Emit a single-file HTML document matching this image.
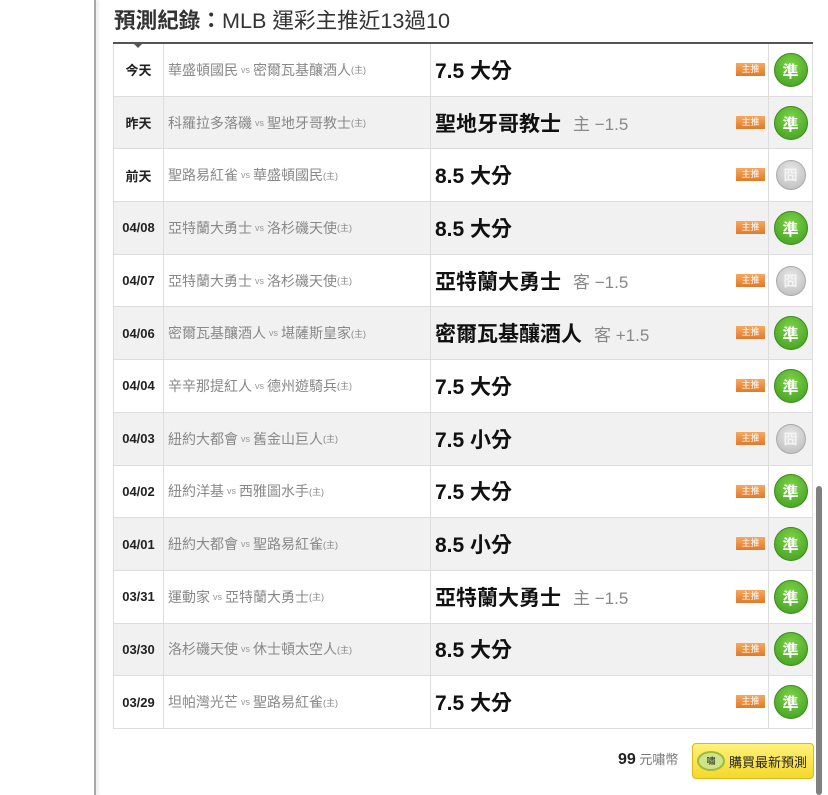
<!DOCTYPE html>
<html><head><meta charset="utf-8"><style>
*{margin:0;padding:0;box-sizing:border-box}
body{width:828px;height:795px;background:#fff;position:relative;overflow:hidden;font-family:"Liberation Sans","Noto Sans CJK TC",sans-serif}
.lb{position:absolute;left:94px;top:0;width:2px;height:795px;background:#a8a8a8;box-shadow:2px 0 3px #ddd}
.sb{position:absolute;left:816px;top:486px;width:6px;height:309px;background:#808080;border-radius:3px}
h1{position:absolute;left:114px;top:4px;font-size:21.6px;font-weight:normal;color:#333;white-space:nowrap}
h1 b{font-weight:bold}
.tb{position:absolute;left:113px;top:42px;width:700px;border-top:2px solid #555}
.tri{position:absolute;left:133px;top:43px;width:0;height:0;border-left:5px solid transparent;border-right:5px solid transparent;border-top:5px solid #555}
.r{display:flex;height:52.7px;border-bottom:1px solid #ddd}
.r.g{background:#f1f1f1}
.r>div{border-left:1px solid #ddd;display:flex;align-items:center}
.d{width:50px;justify-content:center;font-size:13px;font-weight:bold;color:#222}
.m{width:267px;padding-left:4px;font-size:14px;color:#888;white-space:nowrap}
.m small{font-size:9px;color:#999;margin:0 3px}
.m i{font-style:normal;font-size:9px}
.p{width:338px;padding-left:4px;font-size:21px;font-weight:bold;color:#111;position:relative}
.p span{font-weight:normal;color:#888;font-size:17px;margin-left:12px}
.bd{position:absolute;right:3px;top:19px;width:29px;height:13px;background:linear-gradient(#f6a860,#e07a2a);color:#fff;font-size:9px;font-weight:normal;font-style:normal;text-align:center;line-height:13px}
.s{width:45px;justify-content:center;border-right:1px solid #ddd}
.c{width:34px;height:34px;border-radius:50%;background:radial-gradient(circle at 50% 35%,#7fd34a,#3c9b1c);color:#fff;font-size:16px;font-weight:bold;display:flex;align-items:center;justify-content:center;border:1px solid #3a8a1a}
.c.x{width:30px;height:30px;background:radial-gradient(circle at 50% 35%,#e8e8e8,#b8b8b8);border:1px solid #aaa;color:#f4f4f4;font-size:14px}
.ft{position:absolute;left:618px;top:749px;font-size:13px;color:#777}
.ft b{font-size:16px;color:#222}
.btn{position:absolute;left:692px;top:743px;width:122px;height:36px;background:linear-gradient(#fff27a,#f5d82a);border:1px solid #d9b820;border-radius:4px;font-size:13px;color:#222;display:flex;align-items:center;padding-left:4px}
.btn i{display:inline-block;width:28px;height:20px;border-radius:50%;background:#cfe48a;border:2px solid #9bbb3a;margin-right:4px;font-style:normal;font-size:9px;text-align:center;line-height:16px}
</style></head><body>
<div class="lb"></div><div class="sb"></div>
<h1><b>預測紀錄：</b>MLB 運彩主推近13過10</h1>
<div class="tb">
<div class="r"><div class="d">今天</div><div class="m">華盛頓國民<small>vs</small>密爾瓦基釀酒人<i>(主)</i></div><div class="p">7.5 大分<em class="bd">主推</em></div><div class="s"><div class="c">準</div></div></div>
<div class="r g"><div class="d">昨天</div><div class="m">科羅拉多落磯<small>vs</small>聖地牙哥教士<i>(主)</i></div><div class="p">聖地牙哥教士<span>主 −1.5</span><em class="bd">主推</em></div><div class="s"><div class="c">準</div></div></div>
<div class="r"><div class="d">前天</div><div class="m">聖路易紅雀<small>vs</small>華盛頓國民<i>(主)</i></div><div class="p">8.5 大分<em class="bd">主推</em></div><div class="s"><div class="c x">囧</div></div></div>
<div class="r g"><div class="d">04/08</div><div class="m">亞特蘭大勇士<small>vs</small>洛杉磯天使<i>(主)</i></div><div class="p">8.5 大分<em class="bd">主推</em></div><div class="s"><div class="c">準</div></div></div>
<div class="r"><div class="d">04/07</div><div class="m">亞特蘭大勇士<small>vs</small>洛杉磯天使<i>(主)</i></div><div class="p">亞特蘭大勇士<span>客 −1.5</span><em class="bd">主推</em></div><div class="s"><div class="c x">囧</div></div></div>
<div class="r g"><div class="d">04/06</div><div class="m">密爾瓦基釀酒人<small>vs</small>堪薩斯皇家<i>(主)</i></div><div class="p">密爾瓦基釀酒人<span>客 +1.5</span><em class="bd">主推</em></div><div class="s"><div class="c">準</div></div></div>
<div class="r"><div class="d">04/04</div><div class="m">辛辛那提紅人<small>vs</small>德州遊騎兵<i>(主)</i></div><div class="p">7.5 大分<em class="bd">主推</em></div><div class="s"><div class="c">準</div></div></div>
<div class="r g"><div class="d">04/03</div><div class="m">紐約大都會<small>vs</small>舊金山巨人<i>(主)</i></div><div class="p">7.5 小分<em class="bd">主推</em></div><div class="s"><div class="c x">囧</div></div></div>
<div class="r"><div class="d">04/02</div><div class="m">紐約洋基<small>vs</small>西雅圖水手<i>(主)</i></div><div class="p">7.5 大分<em class="bd">主推</em></div><div class="s"><div class="c">準</div></div></div>
<div class="r g"><div class="d">04/01</div><div class="m">紐約大都會<small>vs</small>聖路易紅雀<i>(主)</i></div><div class="p">8.5 小分<em class="bd">主推</em></div><div class="s"><div class="c">準</div></div></div>
<div class="r"><div class="d">03/31</div><div class="m">運動家<small>vs</small>亞特蘭大勇士<i>(主)</i></div><div class="p">亞特蘭大勇士<span>主 −1.5</span><em class="bd">主推</em></div><div class="s"><div class="c">準</div></div></div>
<div class="r g"><div class="d">03/30</div><div class="m">洛杉磯天使<small>vs</small>休士頓太空人<i>(主)</i></div><div class="p">8.5 大分<em class="bd">主推</em></div><div class="s"><div class="c">準</div></div></div>
<div class="r"><div class="d">03/29</div><div class="m">坦帕灣光芒<small>vs</small>聖路易紅雀<i>(主)</i></div><div class="p">7.5 大分<em class="bd">主推</em></div><div class="s"><div class="c">準</div></div></div>
</div>
<div class="tri"></div>
<div class="ft"><b>99</b> 元嘯幣</div>
<div class="btn"><i>嘯</i>購買最新預測</div>
</body></html>
